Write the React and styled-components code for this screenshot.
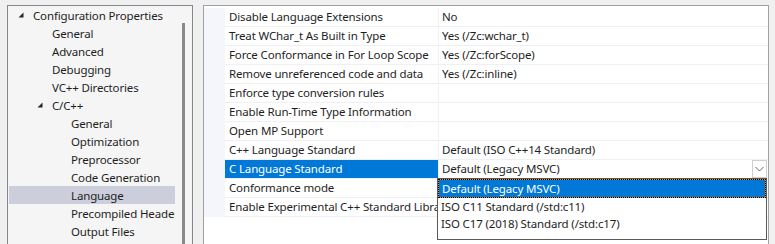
import React from 'react';
import styled, { createGlobalStyle } from 'styled-components';

const GlobalStyle = createGlobalStyle`
  html, body {
    margin: 0;
    padding: 0;
    background: #f0f0f0;
  }
  * {
    box-sizing: border-box;
  }
`;

const FONT = `"Noto Sans", "Open Sans", sans-serif`;

const Page = styled.div`
  display: flex;
  gap: 10px;
  height: 244px;
  padding: 5px 6px 0 7px;
  overflow: hidden;
  font-family: ${FONT};
  font-size: 11.5px;
  letter-spacing: -0.15px;
  color: #1e1e1e;
`;

// 왼쪽 트리 패널
const TreePanel = styled.div`
  display: flex;
  width: 186px;
  height: 260px;
  flex-shrink: 0;
  border: 1px solid #828790;
  background: #f5f5f5;
`;

const TreeList = styled.div`
  flex: 1;
  padding-left: 1px;
  overflow: hidden;
`;

const TreeRow = styled.div`
  display: flex;
  align-items: center;
  height: 18px;
  padding-left: ${(p) => p.$indent}px;
  white-space: nowrap;
  background: ${(p) => (p.$selected ? '#cccedb' : 'transparent')};
`;

const Expander = styled.span`
  display: flex;
  align-items: center;
  width: 15px;
  flex-shrink: 0;
`;

const ScrollTrack = styled.div`
  display: flex;
  justify-content: center;
  width: 17px;
  padding-top: 17px;
`;

const ScrollThumb = styled.div`
  width: 3px;
  height: 100%;
  background: #8a8a8a;
`;

// 오른쪽 속성 그리드
const GridPanel = styled.div`
  position: relative;
  flex: 1;
  height: 260px;
  border: 1px solid #a0a0a0;
  background: #ffffff;
  padding-top: 2px;
`;

const PropRow = styled.div`
  display: grid;
  grid-template-columns: 21px 214px 1fr;
  height: 19px;
`;

const Gutter = styled.div`
  background: #f4f6fb;
`;

const NameCell = styled.div`
  padding-left: 4px;
  line-height: 18px;
  white-space: nowrap;
  overflow: hidden;
  border-bottom: 1px solid #eff0f3;
  border-right: 1px solid #eff0f3;
  background: ${(p) => (p.$selected ? '#0078d7' : '#ffffff')};
  color: ${(p) => (p.$selected ? '#ffffff' : '#1e1e1e')};
`;

const ValueCell = styled.div`
  display: flex;
  align-items: flex-start;
  padding-left: 3px;
  line-height: 18px;
  white-space: nowrap;
  overflow: hidden;
  border-bottom: 1px solid #eff0f3;
`;

const ValueText = styled.span`
  flex: 1;
`;

const DropButton = styled.div`
  display: flex;
  align-items: center;
  justify-content: center;
  width: 15px;
  height: 18px;
  margin-right: 1px;
  border: 1px solid #cfcfcf;
  background: #ffffff;
`;

const DropList = styled.div`
  position: absolute;
  left: 233px;
  top: 172px;
  width: 330px;
  height: 62px;
  border: 1px solid #5a5a5a;
  background: #ffffff;
`;

const DropItem = styled.div`
  height: ${(p) => (p.$selected ? 19 : 17)}px;
  line-height: 17px;
  padding-left: 3px;
  white-space: nowrap;
  background: ${(p) => (p.$selected ? '#0078d7' : 'transparent')};
  color: ${(p) => (p.$selected ? '#ffffff' : '#1e1e1e')};
  border: ${(p) => (p.$selected ? '1px solid #f08a24' : 'none')};
  outline: ${(p) => (p.$selected ? '1px dotted #000000' : 'none')};
  outline-offset: -1px;
`;

const TREE = [
  { label: 'Configuration Properties', level: 0, expanded: true },
  { label: 'General', level: 1 },
  { label: 'Advanced', level: 1 },
  { label: 'Debugging', level: 1 },
  { label: 'VC++ Directories', level: 1 },
  { label: 'C/C++', level: 1, expanded: true },
  { label: 'General', level: 2 },
  { label: 'Optimization', level: 2 },
  { label: 'Preprocessor', level: 2 },
  { label: 'Code Generation', level: 2 },
  { label: 'Language', level: 2, selected: true },
  { label: 'Precompiled Headers', level: 2 },
  { label: 'Output Files', level: 2 },
];

const PROPS = [
  ['Disable Language Extensions', 'No'],
  ['Treat WChar_t As Built in Type', 'Yes (/Zc:wchar_t)'],
  ['Force Conformance in For Loop Scope', 'Yes (/Zc:forScope)'],
  ['Remove unreferenced code and data', 'Yes (/Zc:inline)'],
  ['Enforce type conversion rules', ''],
  ['Enable Run-Time Type Information', ''],
  ['Open MP Support', ''],
  ['C++ Language Standard', 'Default (ISO C++14 Standard)'],
  ['C Language Standard', 'Default (Legacy MSVC)', true],
  ['Conformance mode', ''],
  ['Enable Experimental C++ Standard Library Modules', ''],
];

const OPTIONS = [
  'Default (Legacy MSVC)',
  'ISO C11 Standard (/std:c11)',
  'ISO C17 (2018) Standard (/std:c17)',
];

const Triangle = () => (
  <svg width="6" height="6" viewBox="0 0 6 6">
    <polygon points="5.5,0.5 5.5,5.5 0.5,5.5" fill="#262626" />
  </svg>
);

const Chevron = () => (
  <svg width="9" height="6" viewBox="0 0 9 6">
    <polyline points="0.5,1 4.5,5 8.5,1" fill="none" stroke="#6a6a6a" strokeWidth="1" />
  </svg>
);

const App = () => {
  return (
    <>
      <GlobalStyle />
      <Page>
        <TreePanel>
          <TreeList>
            {TREE.map((item, i) => (
              <TreeRow key={i} $indent={9 + item.level * 19} $selected={item.selected}>
                <Expander>{item.expanded && <Triangle />}</Expander>
                {item.label}
              </TreeRow>
            ))}
          </TreeList>
          <ScrollTrack>
            <ScrollThumb />
          </ScrollTrack>
        </TreePanel>

        <GridPanel>
          {PROPS.map(([name, value, editing], i) => (
            <PropRow key={i}>
              <Gutter />
              <NameCell $selected={editing}>{name}</NameCell>
              <ValueCell>
                <ValueText>{value}</ValueText>
                {editing && (
                  <DropButton>
                    <Chevron />
                  </DropButton>
                )}
              </ValueCell>
            </PropRow>
          ))}
          {/* 열린 드롭다운 목록 */}
          <DropList>
            {OPTIONS.map((opt, i) => (
              <DropItem key={i} $selected={i === 0}>
                {opt}
              </DropItem>
            ))}
          </DropList>
        </GridPanel>
      </Page>
    </>
  );
};

export default App;
